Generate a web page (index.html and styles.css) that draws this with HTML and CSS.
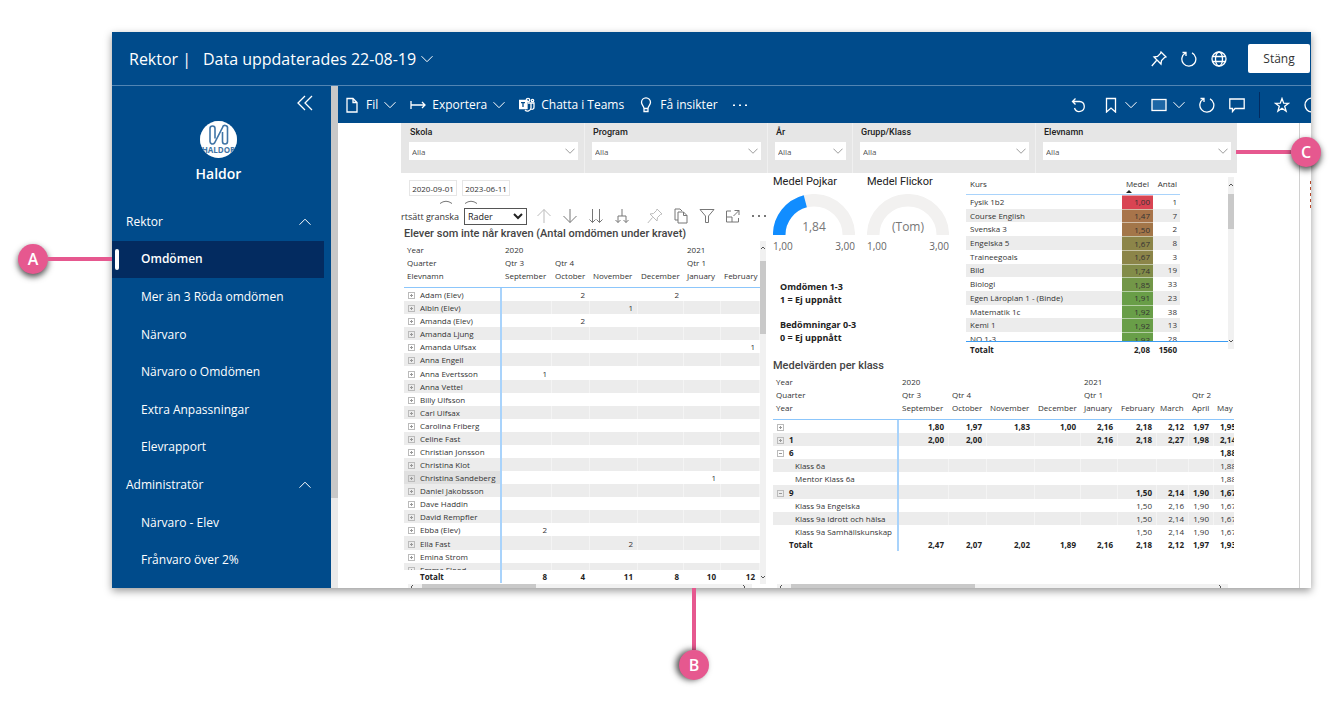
FILE: index.html
```html
<!DOCTYPE html>
<html lang="sv">
<head>
<meta charset="utf-8">
<title>Rektor – Haldor</title>
<link rel="stylesheet" href="styles.css">
</head>
<body>
<svg class="defs" aria-hidden="true">
  <symbol id="down" viewBox="0 0 12 12"><path d="M.5 3.2 6 8.7l5.500-5.500"/></symbol>
  <symbol id="up" viewBox="0 0 12 12"><path d="M.5 8.700 6 3.200l5.500 5.500"/></symbol>
  <symbol id="refresh" viewBox="0 0 16 16"><path d="M11 1.900A7 7 0 1 1 4.500 2M1.500 1.500h3.500V5"/></symbol>
  <symbol id="pin" viewBox="0 0 16 16"><path d="m10 1 5 5-1.500.500-3 3-.5 3.500L3 6l3.500-.5 3-3zM5.500 9.500.800 15"/></symbol>
</svg>
<div class="stage">
<div class="frame">
  <header class="top">
    <h1>Rektor</h1><span class="bar">|</span>
    <button class="plain updated">Data uppdaterades 22-08-19 <svg class="i12"><use href="#down"/></svg></button>
    <div class="top-tools">
      <button class="plain" aria-label="Fäst"><svg class="i16"><use href="#pin"/></svg></button>
      <button class="plain" aria-label="Uppdatera"><svg class="i16"><use href="#refresh"/></svg></button>
      <button class="plain" aria-label="Webb"><svg class="i16" viewBox="0 0 16 16"><circle cx="8" cy="8" r="7"/><ellipse cx="8" cy="8" rx="3.500" ry="7"/><path d="M1.700 5.500h12.600M1.700 10.500h12.600"/></svg></button>
    </div>
    <button class="close">Stäng</button>
  </header>
  <aside class="side">
    <button class="plain collapse" aria-label="Dölj meny"><svg class="i16" viewBox="0 0 16 16"><path d="M8 1 1 8l7 7M15 1 8 8l7 7"/></svg></button>
    <div class="brand">
      <svg class="logo" viewBox="0 0 37 37" role="img" aria-label="Haldor"><defs><clipPath id="disc"><circle cx="18.500" cy="18.500" r="18.500"/></clipPath></defs><g clip-path="url(#disc)"><rect width="37" height="37" fill="#fff"/><path d="M15 17.500V7.500a2.500 2.500 0 0 0-5 0v13a2.500 2.500 0 0 0 4.500 1.500L22.500 6.500a2.500 2.500 0 0 1 5 1v13a2.500 2.500 0 0 1-5 0V11" fill="none" stroke="#3f74a6" stroke-width="1.600"/><text x="18.500" y="32" text-anchor="middle" class="logo-text">HALDOR</text></g></svg>
      <strong>Haldor</strong>
    </div>
    <nav class="nav">
      <button class="plain group">Rektor <svg class="i12"><use href="#up"/></svg></button>
      <a href="#" class="on" aria-current="page">Omdömen</a>
      <a href="#">Mer än 3 Röda omdömen</a>
      <a href="#">Närvaro</a>
      <a href="#">Närvaro o Omdömen</a>
      <a href="#">Extra Anpassningar</a>
      <a href="#">Elevrapport</a>
      <button class="plain group">Administratör <svg class="i12"><use href="#up"/></svg></button>
      <a href="#">Närvaro - Elev</a>
      <a href="#">Frånvaro över 2%</a>
    </nav>
  </aside>
  <div class="side-scroll"><div></div></div>
  <main>
    <div class="bar-tools">
      <button class="plain"><svg class="i16" viewBox="0 0 16 16"><path d="M3 1.500h6l4 4v9.500H3zM9 1.500v4h4"/></svg><span>Fil</span><svg class="i12"><use href="#down"/></svg></button>
      <button class="plain"><svg class="i16" viewBox="0 0 16 16"><path d="M1 4v8M1 8h14M12 5l3 3-3 3"/></svg><span>Exportera</span><svg class="i12"><use href="#down"/></svg></button>
      <button class="plain"><svg class="i16" viewBox="0 0 16 16"><circle cx="9" cy="3" r="1.700"/><circle cx="13.500" cy="3.500" r="1.200"/><path d="M9 6h3v5a3.500 3.500 0 0 1-6 2M12 6h3v4a2 2 0 0 1-3 2"/><path class="solid" d="M0 3.500h8v8H0z"/><path class="cut" d="M2 5.700h4M4 5.700v4.300"/></svg><span>Chatta i Teams</span></button>
      <button class="plain"><svg class="i16" viewBox="0 0 16 16"><path d="M6 11.500C6 9 3.500 8 3.500 5.300a4.500 4.500 0 0 1 9 0C12.500 8 10 9 10 11.500zM6 11.500V14.500h4v-3"/></svg><span>Få insikter</span></button>
      <button class="plain" aria-label="Mer"><svg class="i16" viewBox="0 0 16 16"><path class="solid nos" d="M1 7.500h2v1.500H1zM7 7.500h2v1.500H7zM13 7.500h2v1.500h-2z"/></svg></button>
      <div class="right-tools">
        <button class="plain" aria-label="Återställ"><svg class="i16" viewBox="0 0 16 16"><path d="M5.500 1.500 2.500 4.500l3 3M2.500 4.500H9.500a5 5 0 1 1-5 6.500"/></svg></button>
        <button class="plain mark" aria-label="Bokmärken"><svg class="i16" viewBox="0 0 16 16"><path d="M3.500 1.500h9V15L8 11 3.500 15z"/></svg><svg class="i12"><use href="#down"/></svg></button>
        <button class="plain mark" aria-label="Visa"><svg class="i16" viewBox="0 0 16 16"><rect x="1" y="2.500" width="14" height="11" class="tint"/></svg><svg class="i12"><use href="#down"/></svg></button>
        <button class="plain" aria-label="Uppdatera"><svg class="i16"><use href="#refresh"/></svg></button>
        <button class="plain" aria-label="Kommentera"><svg class="i16" viewBox="0 0 16 16"><path d="M.8 2h14.400v9.500H6L3.500 14.500v-3H.8z"/></svg></button>
        <i class="rule"></i>
        <button class="plain" aria-label="Favorit"><svg class="i16" viewBox="0 0 16 16"><path d="m8 1.500 1.700 4.700 4.900.1-3.900 3 1.400 4.900L8 11.300l-4.100 2.900 1.400-4.900-3.900-3 4.900-.1z"/></svg></button>
        <button class="plain" aria-label="Information"><svg class="i16" viewBox="0 0 16 16"><circle cx="8" cy="8" r="7"/><path d="M8 7v5M8 4v1.500"/></svg></button>
      </div>
    </div>
    <div class="canvas">
      <div class="report">
        <form class="slicers">
          <div><label for="s1">Skola</label><span class="pick"><select id="s1"><option>Alla</option></select><svg class="i12"><use href="#down"/></svg></span></div>
          <div><label for="s2">Program</label><span class="pick"><select id="s2"><option>Alla</option></select><svg class="i12"><use href="#down"/></svg></span></div>
          <div><label for="s3">År</label><span class="pick"><select id="s3"><option>Alla</option></select><svg class="i12"><use href="#down"/></svg></span></div>
          <div><label for="s4">Grupp/Klass</label><span class="pick"><select id="s4"><option>Alla</option></select><svg class="i12"><use href="#down"/></svg></span></div>
          <div><label for="s5">Elevnamn</label><span class="pick"><select id="s5"><option>Alla</option></select><svg class="i12"><use href="#down"/></svg></span></div>
        </form>
        <div class="panels">
          <section class="left">
            <div class="dates"><input aria-label="Från" value="2020-09-01"><input aria-label="Till" value="2023-06-11"></div>
            <div class="knobs"><svg viewBox="0 0 40 4"><path d="M1 3.500q6-4.500 12 0M26 3.500q6-4.500 12 0"/></svg></div>
            <div class="drill">
              <label for="drill"><span>rtsätt granska</span></label>
              <span class="pick"><select id="drill"><option>Rader</option></select><svg viewBox="0 0 12 12"><path d="m2 4 4 4 4-4"/></svg></span>
              <div class="icons">
                <svg class="faint" viewBox="0 0 16 16"><path d="M8 15V1.500M1.500 8 8 1.500 14.500 8"/></svg>
                <svg viewBox="0 0 16 16"><path d="M8 1v13.500M1.500 8 8 14.500 14.500 8"/></svg>
                <svg viewBox="0 0 16 16"><path d="M4.500 1v13.500M1.500 11.500l3 3 3-3M11.500 1v13.500M8.500 11.500l3 3 3-3"/></svg>
                <svg viewBox="0 0 16 16"><path d="M8 1v7M4 14.500V8h8v6.500M1.500 12 4 14.500 6.500 12M9.500 12l2.500 2.500 2.500-2.500"/></svg>
                <svg class="faint gap"><use href="#pin"/></svg>
                <svg viewBox="0 0 16 16"><path d="M5 12H2V1h5l2 2M5 4h5.500L14 7.500V15H5zM10.500 4v3.500H14"/></svg>
                <svg viewBox="0 0 16 16"><path d="M1 1.500h14L9.500 8v6.500h-3V8z"/></svg>
                <svg viewBox="0 0 16 16"><path d="M6 3H1.500v11h12v-4M1.500 9H7v5M9.500 2.500H14V7M14 2.500 8.500 8"/></svg>
                <svg viewBox="0 0 16 16"><path class="solid nos" d="M1 7h2v2H1zM7 7h2v2H7zM13 7h2v2h-2z"/></svg>
              </div>
            </div>
            <h2>Elever som inte når kraven (Antal omdömen under kravet)</h2>
            <div class="matrix m1">
              <table class="head">
                <colgroup><col class="w98"><col class="w50"><col class="w38"><col class="w48"><col class="w46"><col class="w37"><col class="w39"></colgroup>
                <tr><th>Year<th>2020<th><th><th><th>2021<th>
                <tr><th>Quarter<th>Qtr 3<th>Qtr 4<th><th><th>Qtr 1<th>
                <tr><th>Elevnamn<th>September<th>October<th>November<th>December<th>January<th>February
              </table>
              <div class="clip">
              <table class="body">
                <colgroup><col class="w98"><col class="w50"><col class="w38"><col class="w48"><col class="w46"><col class="w37"><col class="w39"></colgroup>
                <tr><th><button class="exp"></button>Adam (Elev)<td><td>2<td><td>2<td><td>
                <tr><th><button class="exp"></button>Albin (Elev)<td><td><td>1<td><td><td>
                <tr><th><button class="exp"></button>Amanda (Elev)<td><td>2<td><td><td><td>
                <tr><th><button class="exp"></button>Amanda Ljung<td><td><td><td><td><td>
                <tr><th><button class="exp"></button>Amanda Ulfsax<td><td><td><td><td><td>1
                <tr><th><button class="exp"></button>Anna Engell<td><td><td><td><td><td>
                <tr><th><button class="exp"></button>Anna Evertsson<td>1<td><td><td><td><td>
                <tr><th><button class="exp"></button>Anna Vettel<td><td><td><td><td><td>
                <tr><th><button class="exp"></button>Billy Ulfsson<td><td><td><td><td><td>
                <tr><th><button class="exp"></button>Carl Ulfsax<td><td><td><td><td><td>
                <tr><th><button class="exp"></button>Carolina Friberg<td><td><td><td><td><td>
                <tr><th><button class="exp"></button>Celine Fast<td><td><td><td><td><td>
                <tr><th><button class="exp"></button>Christian Jonsson<td><td><td><td><td><td>
                <tr><th><button class="exp"></button>Christina Klot<td><td><td><td><td><td>
                <tr><th class="hover"><button class="exp"></button>Christina Sandeberg<td><td><td><td><td>1<td>
                <tr><th><button class="exp"></button>Daniel Jakobsson<td><td><td><td><td><td>
                <tr><th><button class="exp"></button>Dave Haddin<td><td><td><td><td><td>
                <tr><th><button class="exp"></button>David Rempfler<td><td><td><td><td><td>
                <tr><th><button class="exp"></button>Ebba (Elev)<td>2<td><td><td><td><td>
                <tr><th><button class="exp"></button>Ella Fast<td><td><td>2<td><td><td>
                <tr><th><button class="exp"></button>Emina Strom<td><td><td><td><td><td>
                <tr><th><button class="exp"></button>Emma Flood<td><td><td><td><td><td>
              </table>
              </div>
              <table class="total">
                <colgroup><col class="w98"><col class="w50"><col class="w38"><col class="w48"><col class="w46"><col class="w37"><col class="w39"></colgroup>
                <tr><th>Totalt<td>8<td>4<td>11<td>8<td>10<td>12
              </table>
              <div class="vscroll"><svg viewBox="0 0 6 6"><path d="m1 4 2-2 2 2"/></svg><i></i><svg viewBox="0 0 6 6"><path d="m1 2 2 2 2-2"/></svg></div>
              <div class="hscroll"><svg viewBox="0 0 6 6"><path d="M4 1 2 3l2 2"/></svg><i></i><svg viewBox="0 0 6 6"><path d="m2 1 2 2-2 2"/></svg></div>
            </div>
          </section>
          <section class="right">
            <div class="upper">
              <div class="facts">
                <div class="gauges">
                  <figure><figcaption>Medel Pojkar</figcaption>
                    <svg viewBox="0 0 82 42"><path class="track" d="M6.200 41a34.800 34.800 0 0 1 69.600 0"/><path class="fill" d="M6.200 41A34.800 34.800 0 0 1 32.300 7.300"/><text x="41" y="37" text-anchor="middle">1,84</text></svg>
                    <div class="ends"><span>1,00</span><span>3,00</span></div></figure>
                  <figure><figcaption>Medel Flickor</figcaption>
                    <svg viewBox="0 0 82 42"><path class="track" d="M6.200 41a34.800 34.800 0 0 1 69.600 0"/><text x="41" y="37" text-anchor="middle">(Tom)</text></svg>
                    <div class="ends"><span>1,00</span><span>3,00</span></div></figure>
                </div>
                <div class="notes"><p>Omdömen 1-3<br>1 = Ej uppnått</p><p>Bedömningar 0-3<br>0 = Ej uppnått</p></div>
              </div>
              <div class="courses">
                <table class="chead"><colgroup><col class="c156"><col class="c31"><col class="c27"></colgroup>
                  <tr><th>Kurs<th class="sorted">Medel<th>Antal</table>
                <div class="clip">
                <table class="cbody"><colgroup><col class="c156"><col class="c31"><col class="c27"></colgroup>
                  <tr><th>Fysik 1b2<td style="background:#d94452">1,00<td>1
                  <tr><th>Course English<td style="background:#a8744a">1,47<td>7
                  <tr><th>Svenska 3<td style="background:#a37649">1,50<td>2
                  <tr><th>Engelska 5<td style="background:#8c8549">1,67<td>8
                  <tr><th>Traineegoals<td style="background:#8c8549">1,67<td>3
                  <tr><th>Bild<td style="background:#828c49">1,74<td>19
                  <tr><th>Biologi<td style="background:#739748">1,85<td>33
                  <tr><th>Egen Läroplan 1 - (Binde)<td style="background:#699e48">1,91<td>23
                  <tr><th>Matematik 1c<td style="background:#699e48">1,92<td>38
                  <tr><th>Kemi 1<td style="background:#699e48">1,92<td>13
                  <tr><th>NO 1-3<td style="background:#689f48">1,93<td>28
                </table></div>
                <table class="ctotal"><colgroup><col class="c156"><col class="c31"><col class="c27"></colgroup>
                  <tr><th>Totalt<td>2,08<td>1560</table>
                <div class="vscroll"><svg viewBox="0 0 6 6"><path d="m1 4 2-2 2 2"/></svg><i></i><svg viewBox="0 0 6 6"><path d="m1 2 2 2 2-2"/></svg></div>
              </div>
            </div>
            <h2>Medelvärden per klass</h2>
            <div class="matrix m2">
              <table class="head">
                <colgroup><col class="w126"><col class="w50"><col class="w38"><col class="w48"><col class="w46"><col class="w37"><col class="w39"><col class="w32"><col class="w25"><col class="w27"></colgroup>
                <tr><th>Year<th>2020<th><th><th><th>2021<th><th><th><th>
                <tr><th>Quarter<th>Qtr 3<th>Qtr 4<th><th><th>Qtr 1<th><th><th>Qtr 2<th>
                <tr><th>Year<th>September<th>October<th>November<th>December<th>January<th>February<th>March<th>April<th>May
              </table>
              <table class="body">
                <colgroup><col class="w126"><col class="w50"><col class="w38"><col class="w48"><col class="w46"><col class="w37"><col class="w39"><col class="w32"><col class="w25"><col class="w27"></colgroup>
                <tr class="b"><th><button class="exp"></button><td>1,80<td>1,97<td>1,83<td>1,00<td>2,16<td>2,18<td>2,12<td>1,97<td>1,95
                <tr class="b"><th><button class="exp"></button>1<td>2,00<td>2,00<td><td><td>2,16<td>2,18<td>2,27<td>1,98<td>2,14
                <tr class="b"><th><button class="exp open"></button>6<td><td><td><td><td><td><td><td><td>1,88
                <tr><th class="sub">Klass 6a<td><td><td><td><td><td><td><td><td>1,88
                <tr><th class="sub">Mentor Klass 6a<td><td><td><td><td><td><td><td><td>1,88
                <tr class="b"><th><button class="exp open"></button>9<td><td><td><td><td><td>1,50<td>2,14<td>1,90<td>1,67
                <tr><th class="sub">Klass 9a Engelska<td><td><td><td><td><td>1,50<td>2,16<td>1,90<td>1,67
                <tr><th class="sub">Klass 9a Idrott och hälsa<td><td><td><td><td><td>1,50<td>2,14<td>1,90<td>1,67
                <tr><th class="sub">Klass 9a Samhällskunskap<td><td><td><td><td><td>1,50<td>2,14<td>1,90<td>1,67
                <tr class="b last"><th>Totalt<td>2,47<td>2,07<td>2,02<td>1,89<td>2,16<td>2,18<td>2,12<td>1,97<td>1,93
              </table>
              <div class="hscroll"><svg viewBox="0 0 6 6"><path d="M4 1 2 3l2 2"/></svg><i></i><svg viewBox="0 0 6 6"><path d="m2 1 2 2-2 2"/></svg></div>
            </div>
          </section>
        </div>
      </div>
      <div class="filters"><i></i></div>
    </div>
  </main>
</div>
<div class="call a"><b>A</b><i></i></div>
<div class="call bb"><i></i><b>B</b></div>
<div class="call c"><i></i><b>C</b></div>
</div>
</body>
</html>
```
FILE: styles.css
```css
* { box-sizing: border-box; }
body { margin: 0; padding-top: 32px; min-height: 100vh; background: #fff; color: #333; font: 8px/13px "Open Sans", "Noto Sans", sans-serif; }
h1, h2, p, figure { margin: 0; font-weight: 400; }
button, select, input { font: inherit; color: inherit; margin: 0; padding: 0; border: 0; border-radius: 0; background: none; }
svg { fill: none; stroke: currentColor; display: block; flex: none; }
.defs { position: absolute; width: 0; height: 0; }
.i12 { width: 12px; height: 12px; }
.i16 { width: 16px; height: 16px; stroke-width: 1.300; }
.solid { fill: currentColor; }
.nos { stroke: none; }
.cut { stroke: #004b8b; }
.tint { fill: #1d66a5; }
.plain { display: flex; align-items: center; white-space: nowrap; }

.stage { position: relative; margin: 0 33px 0 112px; height: calc(100vh - 147px); }
.frame { height: 100%; display: grid; grid-template: 54px minmax(0, 1fr) / 219px 7px minmax(0, 1fr); overflow: hidden; background: #fff; box-shadow: 0 3px 8px rgba(0, 0, 0, .4); }
.top { grid-column: 1 / -1; display: flex; align-items: center; padding: 0 1px 0 17px; background: #004b8b; border-bottom: 1px solid #5285b3; color: #fff; font-size: 16px; line-height: 24px; }
.top h1 { font-size: 16px; }
.bar { margin: 0 12px 0 4px; }
.updated { gap: 5px; }
.top-tools { display: flex; gap: 14px; margin-left: auto; }
.close { width: 62px; height: 29px; margin-left: 21px; border-radius: 2px; background: #fff; color: #333; font-size: 12px; }

.side { background: #004b8b; color: #fff; font-size: 12px; line-height: 18px; display: flex; flex-direction: column; overflow: hidden; }
.collapse { align-self: flex-end; margin: 9px 18px 0 0; }
.brand { display: flex; flex-direction: column; align-items: center; gap: 7px; padding-right: 6px; margin-top: 10px; }
.logo { width: 37px; height: 37px; }
.logo-text { font: 700 8px "Open Sans", sans-serif; fill: #3f74a6; stroke: none; }
.brand strong { font-size: 14px; font-weight: 600; }
.nav { display: grid; grid-auto-rows: 1fr; flex: none; height: 376px; margin: 20px 7px 0 0; }
.nav a { display: flex; align-items: center; padding-left: 29px; color: #fff; text-decoration: none; position: relative; }
.nav .on { background: #032b60; font-weight: 600; }
.nav .on::before { content: ""; position: absolute; left: 3px; top: 8px; bottom: 8px; width: 4px; border-radius: 2px; background: #fff; }
.nav .group { justify-content: space-between; padding: 0 13px 0 14px; }
.side-scroll { background: #eaeaea; }
.side-scroll div { height: 82%; background: #c8c8c8; }

main { display: flex; flex-direction: column; min-width: 0; overflow: hidden; }
.bar-tools { display: flex; align-items: center; flex: none; height: 37px; gap: 14px; padding-left: 6px; background: #004b8b; color: #fff; font-size: 12px; line-height: 18px; }
.bar-tools .plain { gap: 6px; }
.right-tools { display: flex; align-items: center; gap: 14px; margin: 0 -9px 0 auto; }
.right-tools .mark:nth-child(2) { margin-left: 3px; }
.rule { width: 1px; height: 26px; background: #032b60; }

.canvas { flex: 1; min-height: 0; display: flex; overflow: hidden; }
.report { flex: 1; min-width: 0; margin: 0 62px 0 63px; display: flex; flex-direction: column; }
.filters { width: 12px; border-left: 1px solid #d0d0d0; padding-top: 58px; }
.filters i { display: block; width: 1px; height: 30px; margin-left: auto; background: repeating-linear-gradient(#b5482a 0 3px, #fff 3px 6px); }

.slicers { display: grid; grid-template-columns: 183fr 183fr 85fr 183fr 202fr; height: 50px; background: #e6e6e6; color: #222; }
.slicers > div { padding: 3px 6px 0 7px; border-left: 1px solid #f0f0f0; }
.slicers > div:first-child { border-color: transparent; }
.slicers label { display: block; padding-left: 1px; font: 500 9px/12px Roboto, sans-serif; margin-bottom: 4px; }
.pick { display: grid; align-items: center; }
.pick select, .pick svg { grid-area: 1 / 1; }
.pick select { appearance: none; width: 100%; height: 18px; padding-left: 3px; background: #fff; color: #555; font-size: 8px; }
.pick svg { justify-self: end; margin-right: 3px; pointer-events: none; color: #888; width: 10px; height: 10px; }

.panels { flex: 1; min-height: 0; display: grid; grid-template-columns: 366fr 470fr; }
.left, .right { min-width: 0; display: flex; flex-direction: column; }
.dates { display: flex; gap: 5px; padding: 7px 0 0 8px; }
.dates input { width: 48px; height: 16px; border: 1px solid #e6e6e6; text-align: center; color: #333; }
.knobs svg { width: 40px; height: 4px; margin: 4px 0 0 38px; stroke: #777; }
.drill { display: flex; align-items: center; margin-top: 3px; height: 18px; }
.drill label { width: 63px; font-size: 9px; white-space: nowrap; overflow: hidden; }
.drill .pick { width: 63px; }
.drill .pick select { border: 1px solid #555; font-size: 9px; color: #222; height: 17px; }
.drill .pick svg { stroke-width: 2; color: #222; width: 12px; height: 12px; }
.icons { display: flex; gap: 10px; margin-left: 9px; color: #777; }
.icons svg { width: 16px; height: 16px; }
.icons .faint { color: #bbb; }
.icons .gap { margin-left: 7px; }
h2 { padding-left: 3px; font: 500 11px/14px Roboto, sans-serif; color: #444; margin-top: 2px; white-space: nowrap; }

table { border-collapse: separate; border-spacing: 0; table-layout: fixed; width: 0; }
th, td { padding: 0; font-weight: 400; text-align: left; white-space: nowrap; overflow: hidden; }
.w98 { width: 98px; } .w126 { width: 126px; } .w50 { width: 50px; } .w38 { width: 38px; } .w48 { width: 48px; }
.w46 { width: 46px; } .w37 { width: 37px; } .w39 { width: 39px; } .w32 { width: 32px; } .w25 { width: 25px; } .w27 { width: 27px; }
.c156 { width: 156px; } .c31 { width: 31px; } .c27 { width: 27px; }
.matrix { position: relative; margin-left: 3px; flex: 1; min-height: 0; display: flex; flex-direction: column; overflow: hidden; }
.m1 table { width: 356px; } .m2 table { width: 468px; }
.head { flex: none; border-bottom: 1px solid #8cc6fb; padding-bottom: 5px; margin-top: 2px; }
.head th { padding-left: 3px; height: 13px; overflow: visible; }
.clip { flex: none; overflow: hidden; }
.m1 .clip { height: 282px; }
.m1 .body { height: 288px; }
.m2 .body { height: 131px; }
.matrix .body tr:nth-child(even) { background: #ececec; }
.matrix .body th, .total th { border-right: 2px solid #a9d3fb; padding-left: 4px; }
.body td, .total td { text-align: right; padding-right: 4px; border-right: 1px solid #f4f4f4; }
.matrix .body tr:nth-child(odd) td, .matrix .body tr.last td, .total td { border-color: transparent; }
.body .hover { background: #e0e0e0; }
.exp { width: 7px; height: 7px; margin-right: 5px; vertical-align: 0; border: 1px solid #bbb; background: linear-gradient(#999, #999) center / 3px 1px no-repeat, linear-gradient(#999, #999) center / 1px 3px no-repeat; }
.exp.open { background: linear-gradient(#999, #999) center / 3px 1px no-repeat; }
.b th, .b td, .total th, .total td { font-weight: 700; color: #222; }
.matrix .total th { padding-left: 16px; }
.m2 .body .sub { padding-left: 22px; }
.matrix .body tr.last { background: #fff; }
.m2 .body .last th { padding-left: 16px; }
.vscroll { position: absolute; right: 1px; top: 0; bottom: 0; width: 6px; background: #f1f1f1; display: flex; flex-direction: column; color: #555; }
.vscroll svg, .hscroll svg { width: 6px; height: 6px; }
.vscroll i { background: #c9c9c9; height: 73px; margin: 10px 0 auto; }
.m1 .vscroll { bottom: 4px; padding: 4px 0; }
.hscroll { display: flex; flex: none; margin: auto 15px 0 4px; height: 4px; background: #f1f1f1; color: #555; padding: 0 5px 0 1px; overflow: hidden; }
.hscroll i { width: 114px; background: #c9c9c9; margin: 0 auto 0 7px; }

.right { padding: 0 3px 0 6px; }
.upper { display: flex; flex: none; height: 185px; }
.facts { flex: none; width: 193px; }
.gauges { display: flex; gap: 12px; padding-top: 2px; }
.gauges figure { width: 82px; }
figcaption { font: 400 11px/14px Roboto, sans-serif; white-space: nowrap; color: #222; margin-bottom: 5px; }
.gauges svg { width: 82px; height: 42px; }
.track { stroke: #f2f1f0; stroke-width: 12.500; }
.fill { stroke: #118dff; stroke-width: 12.500; }
.gauges text { font: 12px "Open Sans", sans-serif; fill: #777; stroke: none; }
.ends { display: flex; justify-content: space-between; font-size: 10px; line-height: 14px; margin-top: 3px; color: #666; }
.notes { padding: 27px 0 0 7px; font-size: 9px; line-height: 13px; color: #222; }
.notes p { font-weight: 700; margin-bottom: 12px; }
.courses { position: relative; flex: 1; padding-top: 3px; }
.courses table { width: 214px; }
.chead { border-bottom: 1px solid #a9d3fb; }
.chead th { height: 18px; padding: 0 3px 4px; text-align: right; }
.chead th:first-child, .courses th:first-child { text-align: left; padding-left: 4px; }
.chead .sorted { padding-right: 4px; }
.sorted { position: relative; }
.sorted::after { content: ""; position: absolute; left: 4px; bottom: 1px; border: 3px solid transparent; border-top: 0; border-bottom-color: #222; }
.courses .clip { height: 147px; border-bottom: 1px solid #3b9cf3; }
.cbody { height: 151px; line-height: 12px; }
.courses td { text-align: right; padding-right: 3px; }
.cbody td:nth-child(2) { border-top: 1px solid rgba(255, 255, 255, .5); }
.cbody tr:nth-child(even) { background: #ececec; }
.ctotal th, .ctotal td { font-weight: 700; color: #222; height: 14px; }
.courses .vscroll { top: 4px; bottom: 9px; right: 0; padding: 5px 0; }
.courses .vscroll i { height: 35px; margin-top: 6px; }
.m2 { margin-left: 0; }
.m2 .hscroll { margin: auto 6px 0 4px; }
.m2 .hscroll i { width: 184px; margin-left: 7px; }
.right h2 { padding: 0; margin-top: 1px; }

.call { position: absolute; display: flex; align-items: center; color: #fff; font: 600 16px/30px "Open Sans", sans-serif; }
.call b { width: 30px; height: 30px; border-radius: 50%; background: #e6588f; text-align: center; font-weight: 600; box-shadow: 0 3px 6px rgba(0, 0, 0, .7); }
.call i { background: #e6588f; }
.a { right: 100%; top: 212px; }
.a i { width: 64px; height: 4px; }
.bb { left: 567px; top: 100%; flex-direction: column; }
.bb b { box-shadow: -3px 0 6px rgba(0, 0, 0, .7); }
.bb i { width: 4px; height: 62px; }
.c { right: -10px; top: 105px; }
.c i { width: 55px; height: 4px; }
```
